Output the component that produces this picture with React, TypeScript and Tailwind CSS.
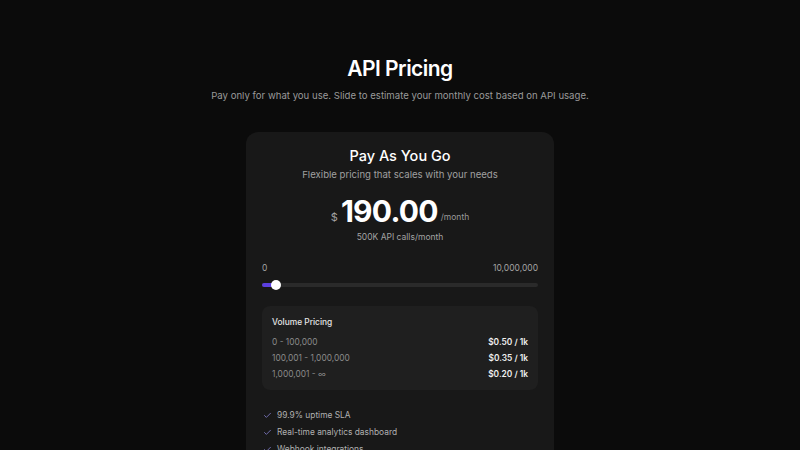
import React, { useState } from 'react';
import { Check } from 'lucide-react';

const tiers = [
  { range: '0 - 100,000', price: '$0.50 / 1k' },
  { range: '100,001 - 1,000,000', price: '$0.35 / 1k' },
  { range: '1,000,001 - ∞', price: '$0.20 / 1k' },
];

const features = ['99.9% uptime SLA', 'Real-time analytics dashboard', 'Webhook integrations', 'Priority email support'];

export default function App() {
  const [calls] = useState(500000);
  const max = 10000000;
  const pct = (calls / max) * 100;

  return (
    <div className="min-h-screen bg-[#0b0b0b] text-white flex flex-col items-center pt-[55px]" style={{ fontFamily: 'Inter, "Noto Sans", sans-serif' }}>
      <h1 className="text-[21px] leading-[28px] font-semibold tracking-tight">API Pricing</h1>
      <p className="mt-[7px] text-[9.6px] leading-[12px] text-[#9a9a9a]">
        Pay only for what you use. Slide to estimate your monthly cost based on API usage.
      </p>

      <div className="mt-[30px] w-[308px] rounded-xl bg-[#181818] px-4 pt-[14px] pb-6">
        <div className="flex flex-col items-center">
          <h2 className="text-[14.5px] leading-[20px] font-medium">Pay As You Go</h2>
          <p className="mt-[3px] text-[9.6px] leading-[12px] text-[#a0a0a0]">Flexible pricing that scales with your needs</p>
          <div className="mt-[12px] flex items-end gap-[3px]">
            <span className="text-[11px] leading-[16px] text-[#a3a3a3] mb-[4px]">$</span>
            <span className="text-[30px] leading-[36px] font-bold tracking-tight">190.00</span>
            <span className="text-[8.5px] leading-[12px] text-[#9a9a9a] mb-[6px]">/month</span>
          </div>
          <p className="mt-[2px] text-[8.5px] leading-[12px] text-[#a3a3a3]">500K API calls/month</p>
        </div>

        <div className="mt-[19px]">
          <div className="flex justify-between text-[8.5px] leading-[12px] text-[#a3a3a3]">
            <span>0</span>
            <span>10,000,000</span>
          </div>
          <div className="relative mt-[6px] h-[10px] flex items-center">
            <div className="h-[4px] w-full rounded-full bg-[#2a2a2a]" />
            <div className="absolute left-0 h-[4px] rounded-full bg-[#5b3fe0]" style={{ width: `${pct}%` }} />
            <div className="absolute h-[10px] w-[10px] rounded-full bg-white -translate-x-1/2" style={{ left: `${pct}%` }} />
          </div>
        </div>

        <div className="mt-[16px] rounded-lg bg-[#1f1f1f] px-[10px] pt-[10px] pb-[8px]">
          <p className="text-[8.4px] leading-[12px] font-medium text-[#e5e5e5]">Volume Pricing</p>
          <div className="mt-[6px] flex flex-col">
            {tiers.map((t) => (
              <div key={t.range} className="flex justify-between text-[8.4px] leading-[16px]">
                <span className="text-[#8a8a8a]">{t.range}</span>
                <span className="font-semibold text-[#f0f0f0]">{t.price}</span>
              </div>
            ))}
          </div>
        </div>

        <ul className="mt-[19px] flex flex-col gap-[5px] pl-[1px]">
          {features.map((f) => (
            <li key={f} className="flex items-center gap-[5px] text-[8.4px] leading-[12px] text-[#b0b0b0]">
              <Check className="h-[9px] w-[9px] text-[#8b86d9]" strokeWidth={2} />
              <span>{f}</span>
            </li>
          ))}
        </ul>
      </div>
    </div>
  );
}
